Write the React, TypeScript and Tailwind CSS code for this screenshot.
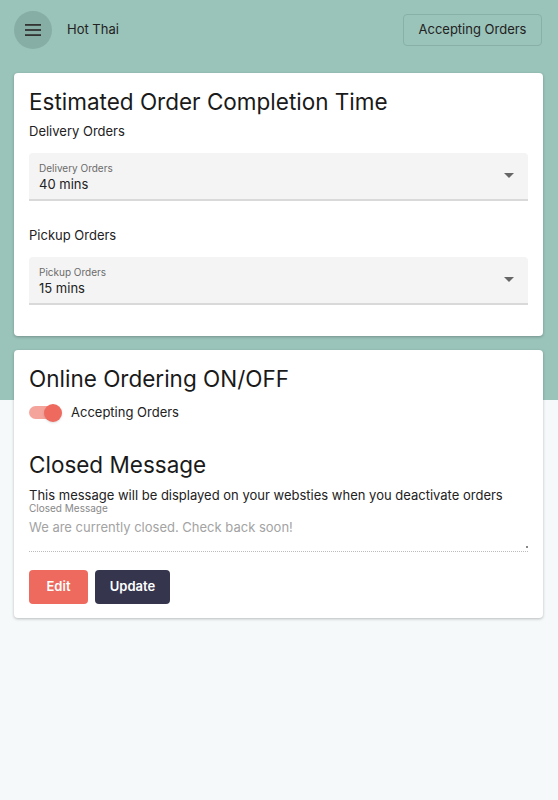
import { useState } from "react";

function SelectField({ label, value }: { label: string; value: string }) {
  return (
    <div className="relative h-[48px] bg-[#f4f4f4] rounded-t border-b-2 border-[#d9d9d9] px-[10px] pt-[9px]">
      <div className="text-[10px] leading-[12px] text-[#6b6b6b]">{label}</div>
      <div className="text-[13px] leading-[18px] text-[#222] mt-[1px]">{value}</div>
      <svg className="absolute right-[14px] top-[20px]" width="10" height="5" viewBox="0 0 10 5">
        <path d="M0 0 L10 0 L5 5 Z" fill="#666" />
      </svg>
    </div>
  );
}

export default function App() {
  const [accepting, setAccepting] = useState(true);

  return (
    <div
      className="min-h-[800px] w-full bg-[linear-gradient(to_bottom,#9ac3b9_400px,#f6f9fa_400px)] text-[#1c1c1c]"
      style={{ fontFamily: "Inter, 'Noto Sans', sans-serif" }}
    >
      {/* Top bar */}
      <header className="flex items-center justify-between pl-[14px] pr-[16px] pt-[11px]">
        <div className="flex items-center">
          <button className="w-[38px] h-[38px] rounded-full bg-[#87aea5] flex items-center justify-center">
            <svg width="16" height="12" viewBox="0 0 16 12">
              <rect x="0" y="0" width="16" height="1.8" fill="#333" />
              <rect x="0" y="5.1" width="16" height="1.8" fill="#333" />
              <rect x="0" y="10.2" width="16" height="1.8" fill="#333" />
            </svg>
          </button>
          <span className="ml-[15px] text-[13px] text-[#222]">Hot Thai</span>
        </div>
        <button className="h-[32px] w-[139px] border border-[#88b0a6] rounded text-[13px] text-[#222] bg-[#9ac3b9]">
          Accepting Orders
        </button>
      </header>

      <main className="pl-[14px] pr-[15px] pt-[24px] pb-8 flex flex-col gap-[14px]">
        {/* Card 1 */}
        <section className="bg-white rounded shadow-[0_1px_3px_rgba(0,0,0,0.25)] px-[15px] pt-[15px] pb-[31px]">
          <h2 className="text-[22.5px] leading-[28px] text-[#1a1a1a]">Estimated Order Completion Time</h2>
          <div className="text-[13px] mt-[6px] text-[#222]">Delivery Orders</div>
          <div className="mt-[11px]">
            <SelectField label="Delivery Orders" value="40 mins" />
          </div>
          <div className="text-[13px] mt-[25px] text-[#222]">Pickup Orders</div>
          <div className="mt-[12px]">
            <SelectField label="Pickup Orders" value="15 mins" />
          </div>
        </section>

        {/* Card 2 */}
        <section className="bg-white rounded shadow-[0_1px_3px_rgba(0,0,0,0.25)] px-[15px] pt-[15px] pb-[14px]">
          <h2 className="text-[22.5px] leading-[28px] text-[#1a1a1a]">Online Ordering ON/OFF</h2>
          <label className="flex items-center mt-[10px] cursor-pointer">
            <button
              onClick={() => setAccepting(!accepting)}
              className="relative w-[34px] h-[16px] flex items-center"
            >
              <span className={"block w-[30px] h-[13px] rounded-full " + (accepting ? "bg-[#f5a49c]" : "bg-[#bbb]")} />
              <span
                className={
                  "absolute top-[-1px] w-[18px] h-[18px] rounded-full shadow " +
                  (accepting ? "left-[15px] bg-[#ee6a5e]" : "left-0 bg-[#f1f1f1]")
                }
              />
            </button>
            <span className="ml-[8px] text-[13px] text-[#222]">Accepting Orders</span>
          </label>

          <h2 className="text-[22.5px] leading-[28px] text-[#1a1a1a] mt-[28px]">Closed Message</h2>
          <p className="text-[13px] leading-[15px] text-[#222] mt-[9px]">
            This message will be displayed on your websties when you deactivate orders
          </p>
          <div className="text-[10px] leading-[11px] text-[#888]">Closed Message</div>
          <div className="relative border-b border-dotted border-[#bbb] h-[38px] pt-[4px]">
            <div className="text-[13px] text-[#a3a3a3]">We are currently closed. Check back soon!</div>
            <span className="absolute right-0 bottom-[3px] w-[2px] h-[2px] bg-[#888]" />
          </div>
          <div className="flex gap-[7px] mt-[18px]">
            <button className="h-[34px] w-[59px] rounded bg-[#ee6a5e] text-white text-[13px] font-semibold">Edit</button>
            <button className="h-[34px] w-[75px] rounded bg-[#35354e] text-white text-[13px] font-semibold">Update</button>
          </div>
        </section>
      </main>
    </div>
  );
}
